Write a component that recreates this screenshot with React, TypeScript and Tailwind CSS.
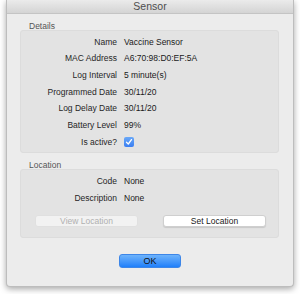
import React from "react";

const Row = ({ label, children }: { label: string; children: React.ReactNode }) => (
  <div className="flex items-center h-[16.67px]">
    <div className="w-[96px] text-right text-[#262626]">{label}</div>
    <div className="ml-[7px] text-[#1a1a1a] flex items-center">{children}</div>
  </div>
);

export default function App() {
  return (
    <div
      className="w-[300px] h-[294px] bg-white relative"
      style={{ fontFamily: '"Liberation Sans", Arial, sans-serif' }}
    >
      <div className="ml-[6px] w-[288px] h-[287px] bg-[#ececec] border border-[#bdbdbd] border-t-0 rounded-b-[4px] shadow-[0_2px_6px_rgba(0,0,0,0.35)] flex flex-col">
        <div className="h-[14px] shrink-0 bg-gradient-to-b from-[#ebebeb] to-[#d4d4d4] border-b border-[#c4c4c4] flex items-center justify-center text-[10.5px] leading-none text-[#4d4d4d]">
          Sensor
        </div>
        <div className="px-[13px] flex flex-col text-[8.5px] leading-[10px]">
          <div className="h-[16px] pt-[8px] pl-[9px] text-[#555] leading-[8px]">Details</div>
          <div className="bg-[#e3e3e3] border border-[#dcdcdc] rounded-[3px] pt-[2.5px] pb-[2px] mr-[1px]">
            <Row label="Name">Vaccine Sensor</Row>
            <Row label="MAC Address">A6:70:98:D0:EF:5A</Row>
            <Row label="Log Interval">5 minute(s)</Row>
            <Row label="Programmed Date">30/11/20</Row>
            <Row label="Log Delay Date">30/11/20</Row>
            <Row label="Battery Level">99%</Row>
            <Row label="Is active?">
              <div className="w-[10px] h-[10px] rounded-[2px] bg-gradient-to-b from-[#6aa8f7] to-[#3a7ef2] flex items-center justify-center">
                <svg width="8" height="8" viewBox="0 0 8 8">
                  <path d="M1.5 4.2 L3.3 6 L6.5 1.6" stroke="white" strokeWidth="1.3" fill="none" strokeLinecap="round" strokeLinejoin="round" />
                </svg>
              </div>
            </Row>
          </div>
          <div className="h-[16px] pt-[8px] pl-[9px] text-[#555] leading-[8px]">Location</div>
          <div className="bg-[#e3e3e3] border border-[#dcdcdc] rounded-[3px] pt-[3px] pb-[10px] mr-[1px]">
            <Row label="Code">None</Row>
            <Row label="Description">None</Row>
            <div className="flex items-center mt-[9px] pl-[14px] gap-[25px]">
              <div className="w-[103px] h-[12px] rounded-[3px] bg-[#f2f2f2] border border-[#e0e0e0] flex items-center justify-center text-[#b0b0b0]">
                View Location
              </div>
              <div className="w-[103px] h-[12px] rounded-[3px] bg-white border border-[#cfcfcf] shadow-[0_1px_1px_rgba(0,0,0,0.12)] flex items-center justify-center text-[#1a1a1a]">
                Set Location
              </div>
            </div>
          </div>
          <div className="flex justify-center mt-[16px]">
            <div className="w-[62px] h-[14px] rounded-[3px] bg-gradient-to-b from-[#6db3fb] to-[#1d7ffa] border border-[#3d86e8] flex items-center justify-center text-[#111] text-[9px]">
              OK
            </div>
          </div>
        </div>
      </div>
    </div>
  );
}
